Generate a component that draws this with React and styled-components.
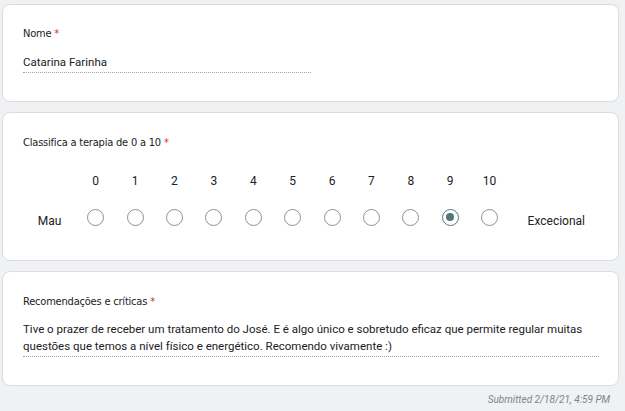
import React from 'react';
import styled, { createGlobalStyle } from 'styled-components';

const GlobalStyle = createGlobalStyle`
  html, body {
    margin: 0;
    padding: 0;
    background: #eff1f2;
  }
  body {
    font-family: Roboto, "Liberation Sans", Arial, sans-serif;
    color: #202124;
  }
`;

const SCALE = Array.from({ length: 11 }, (_, i) => i);

export default function App() {
  return (
    <Page>
      <GlobalStyle />
      <Card $pt={20} $pb={28} $gap={12}>
        <Title>
          Nome <Star>*</Star>
        </Title>
        <Answer $width="288px">Catarina Farinha</Answer>
      </Card>

      <Card $pt={21} $pb={31} $gap={11}>
        <Title>
          Classifica a terapia de 0 a 10 <Star>*</Star>
        </Title>
        <Scale>
          <span />
          {SCALE.map((n) => (
            <Num key={n}>{n}</Num>
          ))}
          <span />
          <EndLabel>Mau</EndLabel>
          {SCALE.map((n) => (
            <RadioCell key={n}>
              <Radio $checked={n === 9} />
            </RadioCell>
          ))}
          <EndLabel>Excecional</EndLabel>
        </Scale>
      </Card>

      <Card $pt={21} $pb={28} $gap={11}>
        <Title>
          Recomendações e críticas <Star>*</Star>
        </Title>
        <Answer $width="576px">
          Tive o prazer de receber um tratamento do José. E é algo único e sobretudo eficaz que permite regular muitas
          <br />
          questões que temos a nível físico e energético. Recomendo vivamente :)
        </Answer>
      </Card>

      <Footer>Submitted 2/18/21, 4:59 PM</Footer>
    </Page>
  );
}

const Page = styled.main`
  display: flex;
  flex-direction: column;
  gap: 10px;
  padding: 4px 6px 0 2px;
  width: 625px;
  box-sizing: border-box;
`;

const Card = styled.section`
  background: #fff;
  border: 1px solid #dadce0;
  border-radius: 8px;
  padding: ${(p) => p.$pt}px 20px ${(p) => p.$pb}px 20px;
  display: flex;
  flex-direction: column;
  gap: ${(p) => p.$gap}px;
`;

const Title = styled.div`
  font-family: "DejaVu Sans", sans-serif;
  font-stretch: condensed;
  font-size: 11px;
  letter-spacing: -0.2px;
  line-height: 17px;
  color: #202124;
`;

const Star = styled.span`
  color: #d93025;
`;

const Answer = styled.div`
  width: ${(p) => p.$width};
  font-size: 11.5px;
  line-height: 17px;
  white-space: nowrap;
  padding-bottom: 1px;
  border-bottom: 1px dotted #9aa0a6;
  color: #202124;
`;

const Scale = styled.div`
  display: grid;
  grid-template-columns: 53px repeat(11, 39.4px) 94px;
  grid-template-rows: 18px 24px;
  row-gap: 15px;
  align-items: center;
  margin-top: 10px;
`;

const Num = styled.div`
  text-align: center;
  font-size: 12px;
  color: #202124;
`;

const EndLabel = styled.div`
  text-align: center;
  font-size: 12px;
  color: #202124;
  padding-top: 8px;
`;

const RadioCell = styled.div`
  display: flex;
  justify-content: center;
`;

const Radio = styled.span`
  width: 17px;
  height: 17px;
  box-sizing: border-box;
  border-radius: 50%;
  border: 1.6px solid ${(p) => (p.$checked ? '#52797a' : '#8d9093')};
  display: flex;
  align-items: center;
  justify-content: center;

  &::after {
    content: '';
    width: 8px;
    height: 8px;
    border-radius: 50%;
    background: #52797a;
    display: ${(p) => (p.$checked ? 'block' : 'none')};
  }
`;

const Footer = styled.div`
  align-self: flex-end;
  margin-right: 9px;
  margin-top: -2px;
  font-size: 10px;
  line-height: 12px;
  font-style: italic;
  color: #80868b;
`;
